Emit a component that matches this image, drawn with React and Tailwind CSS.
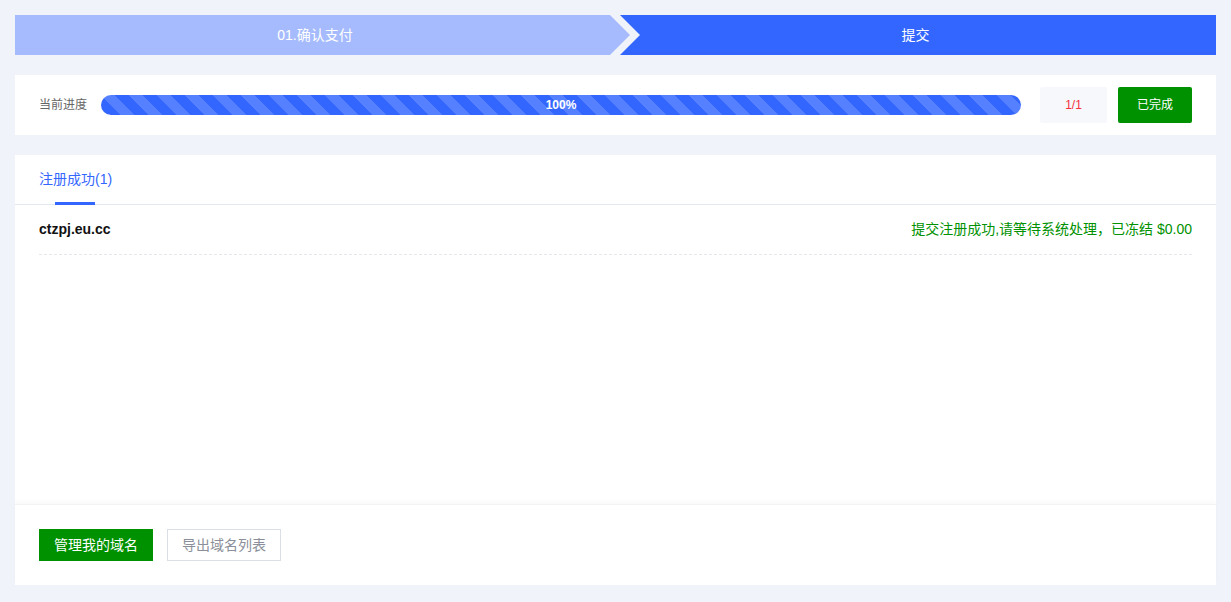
import React from 'react';

const font = { fontFamily: '"Liberation Sans", "Noto Sans CJK SC", sans-serif' };

const Steps = () => (
  <div className="flex h-[40px] text-[14px] text-white">
    <div className="w-[615px] shrink-0 bg-[#a6bbfd] flex items-center justify-center pr-[15px] [clip-path:polygon(0_0,595px_0,100%_50%,595px_100%,0_100%)]">
      01.确认支付
    </div>
    <div className="flex-1 -ml-[10px] bg-[#3366ff] flex items-center justify-center pr-[5px] [clip-path:polygon(0_0,100%_0,100%_100%,0_100%,20px_50%)]">
      提交
    </div>
  </div>
);

const Progress = () => (
  <div className="bg-white h-[60px] flex items-center px-[24px]">
    <span className="text-[12px] text-[#666] w-[48px] shrink-0">当前进度</span>
    <div className="ml-[14px] flex-1 h-[20px] rounded-full bg-[#3366ff] bg-[linear-gradient(45deg,rgba(255,255,255,0.17)_25%,transparent_25%,transparent_50%,rgba(255,255,255,0.17)_50%,rgba(255,255,255,0.17)_75%,transparent_75%,transparent)] bg-[length:28px_28px] flex items-center justify-center">
      <span className="text-[12px] font-bold text-white">100%</span>
    </div>
    <div className="ml-[19px] w-[67px] h-[36px] bg-[#f7f8fc] rounded-[2px] flex items-center justify-center text-[12px] text-[#f5313d]">
      1/1
    </div>
    <button className="ml-[11px] w-[74px] h-[36px] bg-[#009100] rounded-[2px] text-[12px] text-white">
      已完成
    </button>
  </div>
);

const Result = () => (
  <div className="bg-white h-[430px] flex flex-col">
    <div className="h-[50px] border-b border-[#e3e8f0] px-[24px] flex">
      <div className="relative flex items-center text-[14px] text-[#3366ff]">
        注册成功(1)
        <span className="absolute bottom-[-1px] left-[16px] w-[40px] h-[3px] bg-[#3366ff]" />
      </div>
    </div>
    <div className="px-[24px] flex-1">
      <div className="h-[50px] flex items-center justify-between border-b border-dashed border-[#e5e7eb]">
        <span className="text-[14px] font-bold text-[#111]">ctzpj.eu.cc</span>
        <span className="text-[14px] text-[#009100]">提交注册成功,请等待系统处理，已冻结 $0.00</span>
      </div>
    </div>
    <div className="h-[81px] border-t border-[#f3f3f5] shadow-[0_-3px_4px_rgba(0,0,0,0.025)] px-[24px] flex items-center gap-[14px]">
      <button className="w-[114px] h-[32px] bg-[#009100] text-white text-[14px]">管理我的域名</button>
      <button className="w-[114px] h-[32px] border border-[#dcdfe6] bg-white text-[#8a8f99] text-[14px]">导出域名列表</button>
    </div>
  </div>
);

export default function App() {
  return (
    <div className="min-h-screen bg-[#f0f3fa] p-[15px] flex flex-col gap-[20px]" style={font}>
      <Steps />
      <Progress />
      <Result />
    </div>
  );
}
